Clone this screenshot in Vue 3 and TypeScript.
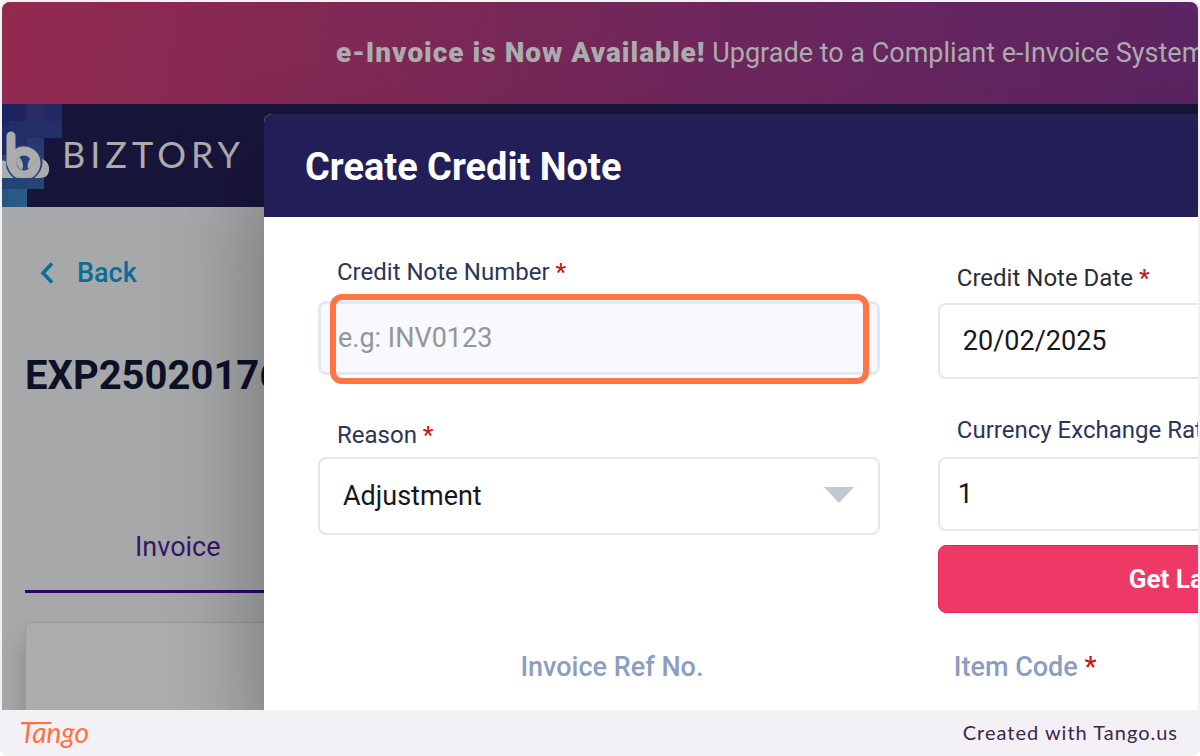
<script setup lang="ts">
import { ref } from 'vue'

interface Tile { x: number; y: number; w: number; h: number; fill: string }

const tiles: Tile[] = [
  { x: 0, y: 0, w: 7, h: 17, fill: '#1b2060' },
  { x: 7, y: 0, w: 18, h: 17, fill: '#1e2460' },
  { x: 25, y: 0, w: 17, h: 17, fill: '#2c2c62' },
  { x: 42, y: 0, w: 18, h: 17, fill: '#222a64' },
  { x: 0, y: 17, w: 7, h: 34, fill: '#1e2a68' },
  { x: 7, y: 17, w: 18, h: 34, fill: '#212e69' },
  { x: 25, y: 17, w: 17, h: 17, fill: '#232e68' },
  { x: 42, y: 17, w: 18, h: 17, fill: '#233068' },
  { x: 25, y: 34, w: 17, h: 17, fill: '#25396f' },
  { x: 0, y: 51, w: 25, h: 34, fill: '#254377' },
  { x: 25, y: 51, w: 17, h: 34, fill: '#264476' },
  { x: 0, y: 85, w: 7, h: 18, fill: '#245780' },
  { x: 7, y: 85, w: 18, h: 18, fill: '#285b85' },
]

const noteNumber = ref('')
const noteDate = ref('20/02/2025')
const reason = ref('Adjustment')
const rate = ref('1')
</script>

<template>
  <div class="page">
    <main class="shot">
      <div class="banner">
        <p><strong>e-Invoice is Now Available!</strong> Upgrade to a Compliant e-Invoice System</p>
      </div>

      <header class="nav">
        <svg class="mark" viewBox="0 0 60 103" aria-hidden="true">
          <defs><clipPath id="base"><rect width="60" height="74" /></clipPath></defs>
          <rect v-for="(t, i) in tiles" :key="i" :x="t.x" :y="t.y" :width="t.w" :height="t.h" :fill="t.fill" />
          <g clip-path="url(#base)">
            <path d="M0 57 C2 56 4 57 5 59 L12 74 H0 Z" fill="#acacad" />
            <path d="M40 55 C46 57 49 64 46 70 C44 74 41 74 30 74 C38 69 42 62 40 55 Z" fill="#acacad" />
            <circle cx="22" cy="59" r="18" fill="#254377" />
            <path d="M9 32 V59" stroke="#acacad" stroke-width="9" stroke-linecap="round" />
            <circle cx="22" cy="59" r="12" fill="#254377" stroke="#acacad" stroke-width="9" />
            <path d="M17 53 C13 57 14 63 20 66 C22 62 21 57 17 53 Z" fill="#acacad" />
            <path d="M29 54 C31 58 30 63 26 65 C25 61 26 57 29 54 Z" fill="#acacad" />
          </g>
        </svg>
        <span class="brand">BIZTORY</span>
      </header>

      <section class="content">
        <a class="back" href="#">
          <svg width="14" height="22" viewBox="0 0 14 22" aria-hidden="true">
            <path d="M12 1.500 L3 11 L12 20.500" fill="none" stroke="#0b6d99" stroke-width="3.500" />
          </svg>
          Back
        </a>
        <h1>EXP25020176</h1>
        <nav class="tabs"><a href="#">Invoice</a></nav>
        <div class="panel"></div>
      </section>

      <form class="modal" @submit.prevent>
        <h2>Create Credit Note</h2>
        <div class="body">
          <div class="column">
            <label for="number">Credit Note Number <b>*</b></label>
            <div class="spot">
              <input id="number" v-model="noteNumber" class="soft" type="text" placeholder="e.g: INV0123" />
              <span class="ring"></span>
            </div>
            <label for="reason" class="second">Reason <b>*</b></label>
            <div class="pick">
              <select id="reason" v-model="reason"><option>Adjustment</option></select>
              <svg width="30" height="16" viewBox="0 0 30 16" aria-hidden="true"><path d="M0 0H30L15 16Z" fill="#c3c9d4" /></svg>
            </div>
          </div>
          <div class="column right">
            <label for="date" class="dark">Credit Note Date <b>*</b></label>
            <input id="date" v-model="noteDate" class="date" type="text" />
            <label for="rate" class="second">Currency Exchange Rate</label>
            <input id="rate" v-model="rate" class="rate" type="text" />
            <button type="button">Get Latest Rate</button>
          </div>
        </div>
        <table>
          <thead>
            <tr>
              <th scope="col">Invoice Ref No.</th>
              <th scope="col" class="code">Item Code <b>*</b></th>
            </tr>
          </thead>
        </table>
      </form>
    </main>

    <footer class="foot">
      <a class="tango" href="#">Tango</a>
      <span>Created with Tango.us</span>
    </footer>
  </div>
</template>

<style>
body { margin: 0; background: #fff; }
</style>

<style scoped>
* { box-sizing: border-box; }
.page {
  display: flex;
  flex-direction: column;
  height: 100vh;
  padding: 2px 2px 0;
  overflow: hidden;
  border-radius: 8px;
  background: #f3f1f6;
  font-family: Roboto, "Liberation Sans", sans-serif;
}
.shot {
  position: relative;
  display: flex;
  flex: 1;
  flex-direction: column;
  min-height: 0;
  overflow: hidden;
  border-radius: 8px 8px 0 0;
  background: #a6a8aa;
}
.banner {
  display: flex;
  flex: none;
  align-items: center;
  height: 102px;
  padding-left: 334px;
  background: linear-gradient(100deg, #932a50 0%, #7c2855 35%, #6d265c 60%, #5a2462 100%);
  color: #acabad;
  font-size: 27px;
  white-space: nowrap;
}
.banner p { margin: 0; line-height: 32px; }
.banner strong { font-size: 28px; font-weight: 900; letter-spacing: 1px; }
.nav {
  display: flex;
  flex: none;
  align-items: center;
  height: 103px;
  background: #18153b;
}
.mark { width: 60px; height: 103px; }
.brand {
  padding-bottom: 4px;
  color: #acacad;
  font-family: Lato, "Liberation Sans", sans-serif;
  font-size: 36px;
  line-height: 42px;
  letter-spacing: 5px;
}
.content {
  display: flex;
  flex: 1;
  flex-direction: column;
  padding: 48px 0 0 23px;
}
.back {
  display: flex;
  align-items: center;
  gap: 23px;
  padding-left: 15px;
  color: #0b6d99;
  font-size: 27px;
  font-weight: 500;
  line-height: 36px;
  text-decoration: none;
}
h1 {
  margin: 60px 0 0;
  color: #0d1128;
  font-size: 40px;
  font-weight: 700;
  line-height: 50px;
}
.tabs {
  margin-top: 120px;
  border-bottom: 3px solid #2c0463;
}
.tabs a {
  display: block;
  padding: 8px 0 25px 110px;
  color: #371666;
  font-size: 27px;
  line-height: 36px;
  text-decoration: none;
}
.panel {
  flex: 1;
  margin-top: 29px;
  border: 1px solid #989a9c;
  border-bottom: 0;
  border-radius: 6px 0 0 0;
  background: #adadad;
  box-shadow: 0 20px 24px rgba(0, 0, 0, 0.2);
}
.modal {
  position: absolute;
  top: 112px;
  bottom: 0;
  left: 262px;
  width: 108%;
  border-radius: 8px 0 0 0;
  background: #fff;
  box-shadow: 0 60px 100px rgba(0, 0, 0, 0.36);
}
h2 {
  margin: 0;
  padding: 29px 41px 26px;
  border-radius: 8px 0 0 0;
  background: #221e57;
  color: #fff;
  font-size: 38px;
  font-weight: 700;
  line-height: 48px;
}
.body {
  display: grid;
  grid-template-columns: 1fr 1fr;
  gap: 58px;
  padding: 40px 56px 0 54px;
}
.column { display: flex; flex-direction: column; }
.column.right { padding-top: 6px; }
label {
  padding-left: 19px;
  color: #2a3558;
  font-size: 24px;
  line-height: 30px;
}
label.dark { color: #2b2d33; }
b { color: #c4161c; font-weight: 500; }
input, select {
  display: block;
  width: 100%;
  height: 76px;
  margin: 0;
  padding: 0 23px;
  border: 2px solid #e6e6e7;
  border-radius: 8px;
  background: #fff;
  color: #17181a;
  font: 400 27px/36px Roboto, "Liberation Sans", sans-serif;
  outline: 0;
  appearance: none;
}
.spot { position: relative; margin-top: 14px; }
.soft {
  height: 74px;
  padding: 0 17px;
  border: 3px solid #e3e9f3;
  background: #f8f9fe;
}
.soft::placeholder { color: #949597; opacity: 1; }
.ring {
  position: absolute;
  inset: -7px 11px -9px 12px;
  border: 6px solid #ff7544;
  border-radius: 12px;
  pointer-events: none;
}
.column .second { margin-top: 45px; }
.pick { position: relative; margin-top: 7px; }
.pick select { height: 78px; }
.pick svg { position: absolute; top: 30px; right: 26px; pointer-events: none; }
.date { margin-top: 10px; }
.right .second { margin-top: 36px; }
.rate { height: 74px; margin-top: 12px; padding: 0 18px; }
button {
  height: 68px;
  margin-top: 14px;
  border: 1px solid #ee1f57;
  border-radius: 8px;
  background: #ee3967;
  color: #fff;
  font: 700 26px/34px Roboto, "Liberation Sans", sans-serif;
}
table {
  width: 100%;
  margin-top: 37px;
  padding: 0 56px 0 52px;
  border-spacing: 0;
  table-layout: fixed;
}
th {
  padding: 0;
  color: #8d9dc1;
  font-size: 27px;
  font-weight: 500;
  line-height: 34px;
}
th.code { padding-left: 46px; text-align: left; }
.foot {
  display: flex;
  flex: none;
  align-items: center;
  justify-content: space-between;
  height: 46px;
  padding: 0 20px 2px 18px;
  color: #3b2650;
  font-family: Lato, "Liberation Sans", sans-serif;
  font-size: 20px;
  line-height: 28px;
  letter-spacing: 1px;
}
.tango {
  position: relative;
  color: #ff7140;
  font-size: 28px;
  font-style: italic;
  font-weight: 400;
  letter-spacing: 0;
  text-decoration: none;
}
.tango::before {
  position: absolute;
  top: 4px;
  left: 1px;
  width: 30px;
  height: 2px;
  background: #ff7140;
  content: "";
}
</style>
